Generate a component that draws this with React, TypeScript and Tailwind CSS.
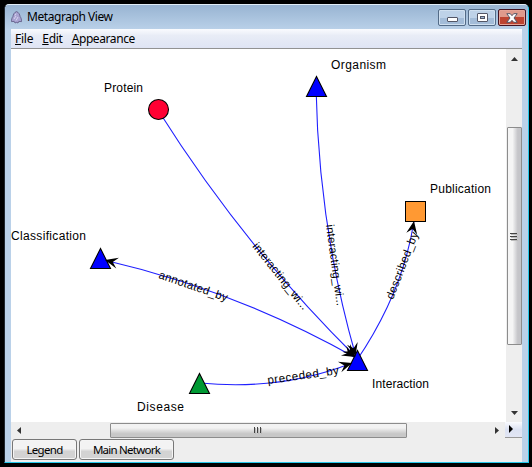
import React from 'react';

const edges = [
  'M158 110Q243.6 246 356 357',
  'M316 87Q318.5 226 355.5 355',
  'M104 260Q236.4 290.5 356 358',
  'M200 383Q281 391 352 363',
  'M357 360Q403 292 414 221',
];

const arrows = [
  { x: 355.5, y: 357, a: 45 },
  { x: 355.5, y: 356, a: 76 },
  { x: 355, y: 357, a: 29 },
  { x: 352, y: 363, a: -18 },
  { x: 414, y: 221, a: -80 },
  { x: 105, y: 260, a: 194 },
];

const edgeLabels = [
  { t: 'interacting_wi...', x: 252, y: 246.5, a: 51.4, w: 82 },
  { t: 'interacting_wi...', x: 326, y: 225, a: 82.4, w: 82 },
  { t: 'annotated_by', x: 158, y: 278, a: 19, w: 72 },
  { t: 'preceded_by', x: 268, y: 384, a: -8, w: 72 },
  { t: 'described_by', x: 393, y: 300, a: -69, w: 71 },
];

const labels = [
  { t: 'Protein', x: 104, y: 92, w: 39 },
  { t: 'Organism', x: 331, y: 69, w: 55 },
  { t: 'Publication', x: 430, y: 193, w: 61 },
  { t: 'Classification', x: 11, y: 240, w: 75 },
  { t: 'Disease', x: 137, y: 411, w: 47 },
  { t: 'Interaction', x: 372, y: 388, w: 57 },
];

const triangles = [
  { x: 316.5, y: 76.5, c: '#0000ff' },
  { x: 100.5, y: 248.5, c: '#0000ff' },
  { x: 199.5, y: 373.5, c: '#009933' },
  { x: 357.5, y: 350.5, c: '#0000ff' },
];

function Graph() {
  return (
    <svg className="block h-[373px] w-[495px] bg-white font-['Liberation_Sans',Arial,sans-serif] text-[12px]" viewBox="11 49 495 373">
      {edges.map((d) => (
        <path key={d} d={d} fill="none" stroke="#2020ff" strokeWidth="1.1" />
      ))}
      {triangles.map((p) => (
        <path key={p.x} d={`M${p.x} ${p.y}l10 20h-20z`} fill={p.c} stroke="#000" strokeWidth="1.1" />
      ))}
      {arrows.map((p, i) => (
        <path key={i} d="M0 0L-13-5.5L-8 0L-13 5.5Z" transform={`translate(${p.x} ${p.y}) rotate(${p.a})`} />
      ))}
      <circle cx="158.5" cy="109.5" r="10" fill="#ff0033" stroke="#000" strokeWidth="1.1" />
      <rect x="405.5" y="201.5" width="20" height="20" fill="#ff9933" stroke="#000" />
      {edgeLabels.map((l) => (
        <text key={l.x} className="text-[11.5px]" transform={`translate(${l.x} ${l.y}) rotate(${l.a})`} textLength={l.w}>{l.t}</text>
      ))}
      {labels.map((l) => (
        <text key={l.t} x={l.x} y={l.y} textLength={l.w}>{l.t}</text>
      ))}
    </svg>
  );
}

function Grip({ className }: { className: string }) {
  return (
    <svg className={className} viewBox="0 0 8 9">
      <path d="M0 1.5h7M0 4.5h7M0 7.5h7" stroke="#444" />
      <path d="M1 2.5h7M1 5.5h7M1 8.5h7" stroke="#bbb" />
    </svg>
  );
}

export default function App() {
  return (
    <div className="h-[467px] w-[532px] overflow-hidden bg-black pl-1 pt-1 font-['Noto_Sans','Open_Sans',sans-serif] text-[12px] text-black">
      <div className="flex h-[459px] w-[525px] flex-col overflow-hidden rounded-t-[5px] border-b-[1.5px] border-l border-r-[1.5px] border-t border-b-[#24c8ea] border-l-[#202830] border-r-[#24c8ea] border-t-[#e1edf7] bg-[#bad1e9]">
        <div className="flex h-6 shrink-0 items-center bg-linear-to-b from-[#98b4d2] to-[#b9d0e8] pl-[6px]">
          <svg className="h-[13px] w-[11px] shrink-0" viewBox="0 0 11 13">
            <path d="M5.5.6C3.4 1.2 2.2 3.5 1.9 5.5C.9 6.8.4 8.6.5 10.6L3.2 10.4L4 12L5.5 11.4L7 12L7.8 10.4L10.5 10.6C10.6 8.6 10.1 6.8 9.1 5.5C8.8 3.5 7.6 1.2 5.5.6Z" fill="#a9a3d2" stroke="#5a567f" strokeWidth=".8" />
            <path d="M4 4.5L5 2.7M3 8L5 5M5 9.5L7 6" stroke="#d8d5ee" />
          </svg>
          <span className="ml-[5px] whitespace-nowrap tracking-[-0.44px]">Metagraph View</span>
          <div className="ml-auto mr-[2px] mt-[1px] flex gap-[2px]">
            <div className="flex h-[17px] w-7 items-center justify-center rounded-[2px] border border-[#536b87] bg-linear-to-b from-[#bed2e8] from-50% to-[#a3bcd8] to-55% shadow-[inset_0_0_0_1px_#d0e0f0]">
              <svg className="mt-[3px] h-[5px] w-[11px]" viewBox="0 0 11 5"><rect x=".5" y=".5" width="10" height="4" rx=".5" fill="#fff" stroke="#535666" /></svg>
            </div>
            <div className="flex h-[17px] w-7 items-center justify-center rounded-[2px] border border-[#536b87] bg-linear-to-b from-[#bed2e8] from-50% to-[#a3bcd8] to-55% shadow-[inset_0_0_0_1px_#d0e0f0]">
              <svg className="h-[9px] w-[11px]" viewBox="0 0 11 9"><rect x=".5" y=".5" width="10" height="8" rx=".5" fill="#fff" stroke="#535666" /><rect x="3.5" y="3.5" width="4" height="2" fill="#9eb6d2" stroke="#535666" /></svg>
            </div>
            <div className="flex h-[17px] w-7 items-center justify-center rounded-[2px] border border-[#431422] bg-linear-to-b from-[#df9a8c] from-45% to-[#bd4431] to-50% shadow-[inset_0_0_0_1px_#e5a497]">
              <svg className="h-[10px] w-3" viewBox="0 0 12 10"><path d="M.8.7h3.5L6 2.7L7.7.7h3.5L8 5l3.2 4.3H7.7L6 7.3L4.3 9.3H.8L4 5Z" fill="#fff" stroke="#535666" /></svg>
            </div>
          </div>
        </div>
        <div className="mx-[6px] w-[511px] flex-1 bg-[#eeeeee]">
          <div className="flex h-5 items-center gap-[9px] border-b border-[#929292] bg-linear-to-b from-[#fafbfe] from-0% via-[#e8ecf6] via-35% to-[#dfe4f4] pl-1 leading-4">
            <span className="tracking-[-0.25px]"><u className="underline-offset-1">F</u>ile</span>
            <span className="tracking-[-0.25px]"><u className="underline-offset-1">E</u>dit</span>
            <span className="tracking-[-0.42px]"><u className="underline-offset-1">A</u>ppearance</span>
          </div>
          <div className="flex h-[373px]">
            <Graph />
            <div className="flex h-[373px] w-4 flex-col items-center bg-[#eeeeee]">
              <svg className="mt-[8px] h-1 w-[7px]" viewBox="0 0 7 4"><path d="M0 4L3.5 0L7 4Z" fill="#333" /></svg>
              <div className="mt-[66px] flex h-[218px] w-[15px] items-center justify-center rounded-[1px] border border-[#8c8c8c] bg-linear-to-r from-[#f5f5f5] from-35% to-[#c5c5c9] to-75%">
                <Grip className="h-[9px] w-2" />
              </div>
              <svg className="mt-[66px] h-1 w-[7px]" viewBox="0 0 7 4"><path d="M0 0h7L3.5 4Z" fill="#333" /></svg>
            </div>
          </div>
          <div className="flex h-4 items-center">
            <svg className="ml-[6px] h-[7px] w-1" viewBox="0 0 4 7"><path d="M4 0v7L0 3.5Z" fill="#333" /></svg>
            <div className="ml-[89px] flex h-[15px] w-[297px] items-center justify-center rounded-[1px] border border-[#8c8c8c] bg-linear-to-b from-[#f2f2f2] from-30% to-[#c7c7c7] to-75%">
              <svg className="mr-[2px] h-[7px] w-[9px]" viewBox="0 0 9 7">
                <path d="M1.5 0v6M4.5 0v6M7.5 0v6" stroke="#444" />
                <path d="M2.5 1v6M5.5 1v6M8.5 1v6" stroke="#bbb" />
              </svg>
            </div>
            <svg className="ml-[88px] h-[7px] w-1" viewBox="0 0 4 7"><path d="M0 0L4 3.5L0 7Z" fill="#333" /></svg>
            <div className="ml-auto flex h-4 w-[17px] items-center border-b border-[#999] bg-linear-to-b from-[#fafbfe] via-[#dce2f2] to-[#e2e6f4] pb-[2px] pl-1">
              <svg className="h-2 w-1" viewBox="0 0 4 8"><path d="M0 0L4 4L0 8Z" fill="#000" /></svg>
            </div>
          </div>
          <div className="flex gap-[2px] pl-px pt-px">
            <button className="h-[21px] w-[65px] whitespace-nowrap rounded-[3px] border border-[#777] bg-linear-to-b from-[#f3f3f3] from-45% to-[#d3d3d3] to-60% text-[11.5px] leading-[18px] tracking-[-0.7px] shadow-[inset_0_0_0_1px_#f5f5f5]">Legend</button>
            <button className="h-[21px] w-[95px] whitespace-nowrap rounded-[3px] border border-[#777] bg-linear-to-b from-[#f3f3f3] from-45% to-[#d3d3d3] to-60% text-[11.5px] leading-[18px] tracking-[-0.75px] shadow-[inset_0_0_0_1px_#f5f5f5]">Main Network</button>
          </div>
        </div>
      </div>
    </div>
  );
}
